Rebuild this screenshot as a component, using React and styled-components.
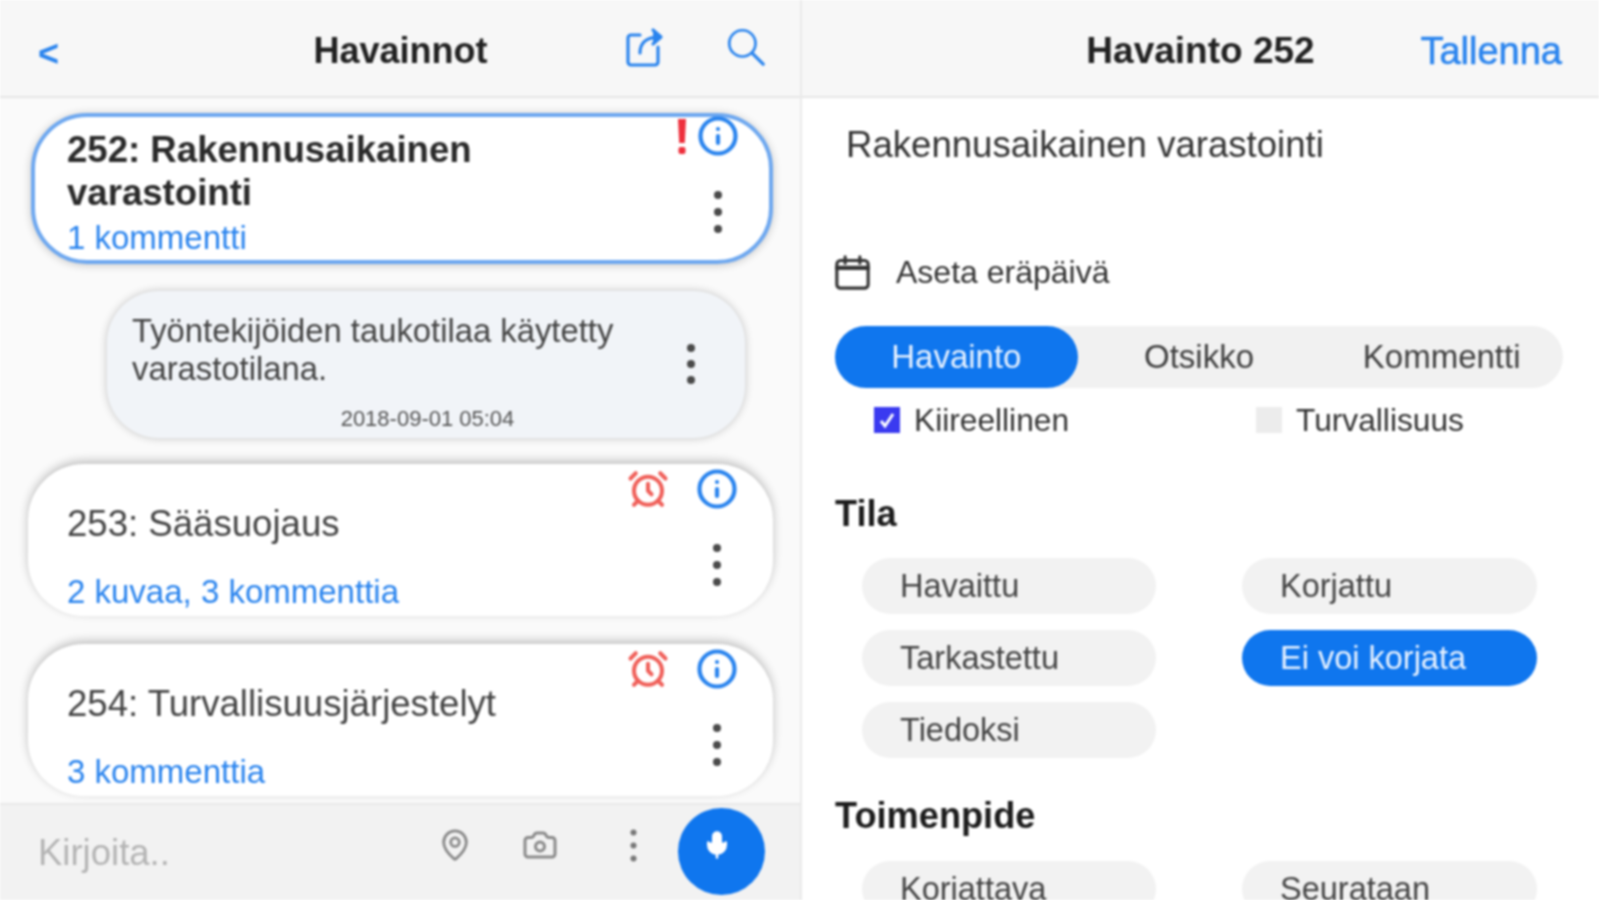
import React from "react";
import styled, { createGlobalStyle } from "styled-components";
import { Info, AlarmClock, MapPin, Camera, Mic } from "lucide-react";

const Global = createGlobalStyle`
  html, body { margin: 0; padding: 0; height: 100%; overflow: hidden; background: #fff; }
  * { box-sizing: border-box; }
`;
const BLUE = "#0f76ee";
const LINK = "#2a84ee";

const Page = styled.div`
  width: 1599px; height: 900px; overflow: hidden;
  display: grid; grid-template-columns: 801px 798px;
  font-family: "Liberation Sans", Arial, sans-serif;
  filter: blur(0.85px);
`;
const LeftPanel = styled.section`
  display: flex; flex-direction: column; height: 900px; background: #fafafa;
`;
const RightPanel = styled.section`
  display: flex; flex-direction: column; height: 900px; overflow: hidden;
  border-left: 2px solid #eaeaea; margin-left: -1px; background: #fff;
`;
const Header = styled.header`
  flex: none; height: 98px; padding-top: 6px; background: #f7f7f7; border-bottom: 2px solid #e6e6e6;
  display: grid; grid-template-columns: 1fr auto 1fr; align-items: center;
`;
const Back = styled.span`
  padding: 6px 0 0 38px; font-size: 36px; font-weight: 700; color: ${LINK}; line-height: 1;
`;
const Title = styled.h1`
  margin: 0; font-size: ${p => p.$size}px; font-weight: 700; color: #222; line-height: 44px;
`;
const HeaderIcons = styled.div`
  display: flex; justify-content: flex-end; align-items: center; gap: 63px; padding: 0 36px 8px 0; color: ${LINK};
`;
const Save = styled.span`
  justify-self: end; padding-right: 37px; font-size: 38px; color: ${LINK}; -webkit-text-stroke: 0.6px ${LINK};
`;
const List = styled.div`
  flex: 1; min-height: 0; overflow: hidden;
  display: flex; flex-direction: column; padding: 15px 28px 0 28px;
`;
const Card = styled.article`
  flex: none; display: flex; justify-content: space-between;
  height: ${p => p.$h}px; margin-top: ${p => p.$mt}px;
  margin-left: ${p => (p.$selected ? 3 : 0)}px;
  background: #fff; border-radius: 56px;
  border: ${p => (p.$selected ? `4px solid #6ea8f0` : "none")};
  box-shadow: ${p => (p.$selected ? "0 1px 8px rgba(0,0,0,.22)" : "0 -3px 10px rgba(0,0,0,.24)")};
`;
const CardText = styled.div`
  padding: ${p => p.$top}px 0 0 ${p => p.$left}px;
`;
const CardTitle = styled.div`
  font-size: 36.6px; line-height: 43px; color: ${p => (p.$bold ? "#2a2a2a" : "#444")};
  font-weight: ${p => (p.$bold ? 700 : 400)}; width: 480px;
`;
const CardLink = styled.div`
  font-size: 33px; line-height: 40px; color: ${LINK}; margin-top: ${p => p.$mt}px;
`;
const Actions = styled.div`
  display: grid; grid-template-columns: auto 36px; column-gap: ${p => p.$gap}px; align-content: start; align-items: center;
  padding: ${p => p.$top}px ${p => p.$right}px 0 0;
`;
const InfoSlot = styled.span`
  display: flex; margin: -3px; color: ${LINK};
`;
const AlarmSlot = styled.span`
  display: flex; margin: -3px; color: #f0605a;
`;
const Bang = styled.span`
  display: block; width: 8px; height: 35px; margin-right: 2px; color: #ee2f3c;
`;
const MoreSlot = styled.span`
  grid-column: 2; display: flex; justify-content: center; margin-top: 35px;
`;
const Bubble = styled.article`
  flex: none; height: 147px; margin: 27px 28px 26px 79px;
  background: #f1f4f8; border-radius: 52px; box-shadow: 0 0 9px rgba(0,0,0,.22);
  display: grid; grid-template-columns: 1fr 36px; padding: 21px 36px 0 25px; align-content: start;
`;
const BubbleText = styled.p`
  margin: 0; font-size: 32.8px; line-height: 38px; color: #444;
`;
const BubbleMore = styled.span`
  display: flex; justify-content: center; align-self: center; margin-top: 28px;
`;
const Stamp = styled.time`
  grid-column: 1 / -1; text-align: center; font-size: 22px; line-height: 26px; color: #555; margin-top: 18px; padding-left: 14px;
`;
const Footer = styled.footer`
  flex: none; height: 97px; background: #f2f2f2; border-top: 2px solid #e8e8e8; margin-top: auto;
  display: flex; align-items: center; padding-right: 36px;
`;
const Placeholder = styled.span`
  flex: 1; padding-left: 38px; font-size: 36.5px; color: #b4b4b4;
`;
const ToolIcon = styled.span`
  display: flex; justify-content: center; width: 36px; margin: 0 ${p => p.$mr}px 15px 0; color: #8a8a8a;
`;
const MicButton = styled.button`
  width: 87px; height: 87px; border-radius: 50%; border: 0; background: ${BLUE}; color: #fff;
  display: flex; align-items: center; justify-content: center; padding: 0 10px 14px 0; margin-bottom: 2px;
`;
const Body = styled.div`
  padding: 25px 36px 0 33px; display: flex; flex-direction: column;
`;
const Subject = styled.div`
  margin-left: 11px; font-size: 36.6px; line-height: 44px; color: #333;
`;
const DueRow = styled.div`
  display: flex; align-items: center; gap: 26px; margin-top: 87px; height: 36px;
  font-size: 32px; color: #333;
`;
const Segments = styled.div`
  display: grid; grid-template-columns: repeat(3, 1fr); height: 62px; margin-top: 36px;
  background: #f1f1f1; border-radius: 31px;
`;
const Segment = styled.div`
  display: flex; align-items: center; justify-content: center; border-radius: 31px;
  font-size: 33px; color: ${p => (p.$active ? "#e8f2ff" : "#3f3f3f")};
  background: ${p => (p.$active ? BLUE : "transparent")};
`;
const Checks = styled.div`
  display: grid; grid-template-columns: 382px 1fr; padding-left: 39px; margin-top: 19px;
`;
const Check = styled.label`
  display: flex; align-items: center; gap: 14px; height: 26px; font-size: 31.7px; color: #333;
`;
const Box = styled.span`
  width: 26px; height: 26px; display: flex; align-items: center; justify-content: center;
  background: ${p => (p.$on ? "#3a3af0" : "#ececec")};
`;
const SectionTitle = styled.h2`
  margin: ${p => p.$mt}px 0 0; font-size: 36.2px; line-height: 44px; font-weight: 700; color: #1c1c1c;
`;
const Chips = styled.div`
  display: grid; grid-template-columns: 294px 295px; column-gap: 86px; row-gap: 16px;
  padding-left: 27px; margin-top: ${p => p.$mt}px;
`;
const Chip = styled.div`
  height: 56px; border-radius: 28px; padding-left: 38px; display: flex; align-items: center;
  font-size: 32.5px; color: ${p => (p.$active ? "#e8f2ff" : "#444")};
  background: ${p => (p.$active ? BLUE : "#f2f2f2")};
`;

const Dots = ({ gap = 17, r = 4, color = "#4a4a4a" }) => (
  <svg width={r * 3} height={gap * 2 + r * 3} viewBox={`0 0 ${r * 3} ${gap * 2 + r * 3}`} fill={color}>
    {[0, 1, 2].map(i => <circle key={i} cx={r * 1.5} cy={r * 1.5 + i * gap} r={r} />)}
  </svg>
);
const ShareIcon = () => (
  <svg width="38" height="40" viewBox="0 0 38 40" fill="none" stroke="currentColor" strokeWidth="3.2" strokeLinecap="round" strokeLinejoin="round">
    <path d="M14 8H5a3 3 0 0 0-3 3v24a3 3 0 0 0 3 3h24a3 3 0 0 0 3-3V20" />
    <path d="M14 26c0-10 6-16 20-16" />
    <path d="M27 3l8 7-8 7" fill="currentColor" />
  </svg>
);
const SearchIcon = () => (
  <svg width="38" height="38" viewBox="0 0 42 42" fill="none" stroke="currentColor" strokeWidth="3" strokeLinecap="round">
    <circle cx="17" cy="17" r="14.5" />
    <path d="M27.5 27.5L40 40" strokeWidth="3.6" />
  </svg>
);
const CalendarIcon = () => (
  <svg width="35" height="35" viewBox="0 0 38 38" fill="none" stroke="#333" strokeWidth="3.4" strokeLinecap="round">
    <rect x="2" y="6" width="34" height="30" rx="4" />
    <path d="M2 14h34" strokeWidth="4.4" />
    <path d="M11 2v7M27 2v7" />
  </svg>
);
const BangIcon = () => (
  <Bang>
    <svg width="8" height="35" viewBox="0 0 8 35" fill="currentColor">
      <path d="M0 0h8l-1.2 24H1.2z" />
      <rect x="0.5" y="28" width="7" height="7" rx="2" />
    </svg>
  </Bang>
);

const IssueCard = ({ title, link, mt }) => (
  <Card $h={152} $mt={mt}>
    <CardText $top={38} $left={39}>
      <CardTitle>{title}</CardTitle>
      <CardLink $mt={27}>{link}</CardLink>
    </CardText>
    <Actions $gap={33} $top={7} $right={38}>
      <AlarmSlot><AlarmClock size={42} strokeWidth={2.3} /></AlarmSlot>
      <InfoSlot><Info size={42} strokeWidth={2.4} /></InfoSlot>
      <MoreSlot><Dots /></MoreSlot>
    </Actions>
  </Card>
);

export default function App() {
  return (
    <>
      <Global />
      <Page>
        <LeftPanel>
          <Header>
            <Back>&lt;</Back>
            <Title $size={36}>Havainnot</Title>
            <HeaderIcons>
              <ShareIcon />
              <SearchIcon />
            </HeaderIcons>
          </Header>
          <List>
            <Card $h={151} $mt={0} $selected>
              <CardText $top={11} $left={32}>
                <CardTitle $bold>252: Rakennusaikainen varastointi</CardTitle>
                <CardLink $mt={4}>1 kommentti</CardLink>
              </CardText>
              <Actions $gap={12} $top={1} $right={33}>
                <BangIcon />
                <InfoSlot><Info size={42} strokeWidth={2.4} /></InfoSlot>
                <MoreSlot><Dots /></MoreSlot>
              </Actions>
            </Card>
            <Bubble>
              <BubbleText>Työntekijöiden taukotilaa käytetty varastotilana.</BubbleText>
              <BubbleMore><Dots gap={16} /></BubbleMore>
              <Stamp>2018-09-01 05:04</Stamp>
            </Bubble>
            <IssueCard title="253: Sääsuojaus" link="2 kuvaa, 3 kommenttia" mt={0} />
            <IssueCard title="254: Turvallisuusjärjestelyt" link="3 kommenttia" mt={28} />
          </List>
          <Footer>
            <Placeholder>Kirjoita..</Placeholder>
            <ToolIcon $mr={49}><MapPin size={34} strokeWidth={2} /></ToolIcon>
            <ToolIcon $mr={57}><Camera size={36} strokeWidth={2} /></ToolIcon>
            <ToolIcon $mr={27}><Dots gap={13} r={3} color="#777" /></ToolIcon>
            <MicButton aria-label="Mikrofoni"><Mic size={30} fill="currentColor" strokeWidth={2} /></MicButton>
          </Footer>
        </LeftPanel>
        <RightPanel>
          <Header>
            <span />
            <Title $size={37}>Havainto 252</Title>
            <Save>Tallenna</Save>
          </Header>
          <Body>
            <Subject>Rakennusaikainen varastointi</Subject>
            <DueRow><CalendarIcon />Aseta eräpäivä</DueRow>
            <Segments>
              <Segment $active>Havainto</Segment>
              <Segment>Otsikko</Segment>
              <Segment>Kommentti</Segment>
            </Segments>
            <Checks>
              <Check>
                <Box $on>
                  <svg width="18" height="18" viewBox="0 0 18 18" fill="none" stroke="#fff" strokeWidth="3"><path d="M3 10l4 5 8-12" /></svg>
                </Box>
                Kiireellinen
              </Check>
              <Check><Box />Turvallisuus</Check>
            </Checks>
            <SectionTitle $mt={59}>Tila</SectionTitle>
            <Chips $mt={22}>
              <Chip>Havaittu</Chip>
              <Chip>Korjattu</Chip>
              <Chip>Tarkastettu</Chip>
              <Chip $active>Ei voi korjata</Chip>
              <Chip>Tiedoksi</Chip>
            </Chips>
            <SectionTitle $mt={36}>Toimenpide</SectionTitle>
            <Chips $mt={23}>
              <Chip>Korjattava</Chip>
              <Chip>Seurataan</Chip>
            </Chips>
          </Body>
        </RightPanel>
      </Page>
    </>
  );
}
